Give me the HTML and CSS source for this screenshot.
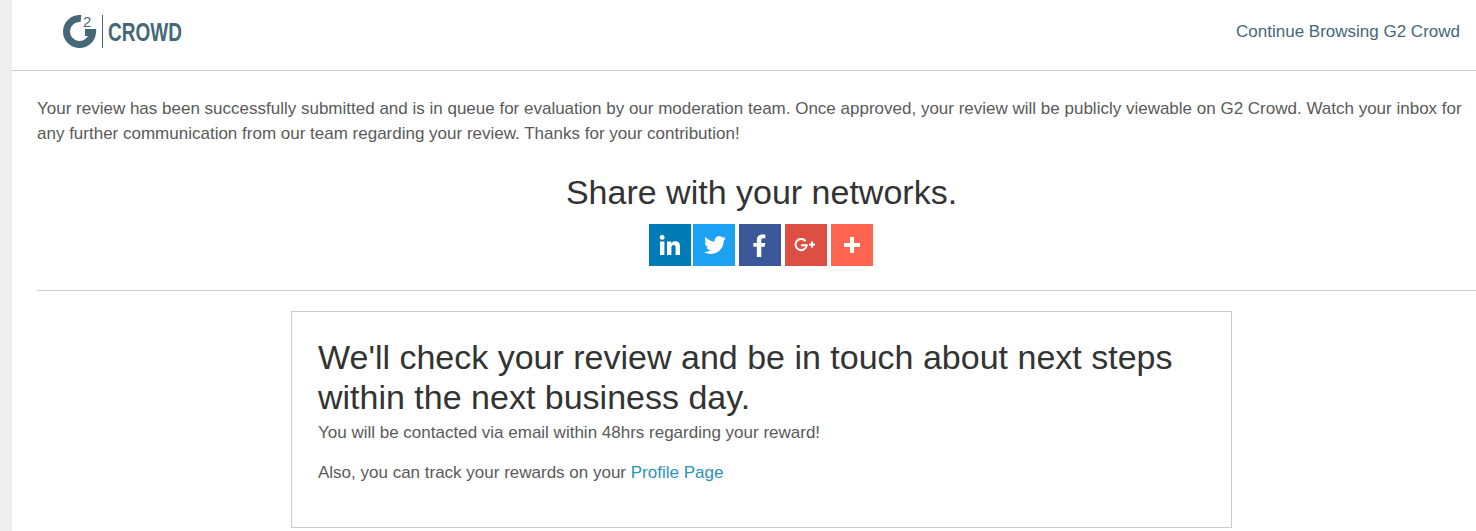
FILE: index.html
```html
<!DOCTYPE html>
<html lang="en">
<head>
    <meta charset="UTF-8">
    <meta name="viewport" content="width=device-width, initial-scale=1.0">
    <title>Review Submitted | G2 Crowd</title>
    <link rel="stylesheet" href="styles.css">
</head>
<body>
    <div class="page">
        <header class="site-header">
            <a class="logo" href="#home">
                <span class="logo-mark">
                    <svg width="34" height="34" viewBox="0 0 34 34" aria-hidden="true">
                        <path d="M18 3.600A13 13 0 1 0 29.500 17.500H22" fill="none" stroke="#456878" stroke-width="7"/>
                    </svg>
                    <span class="logo-two">2</span>
                </span>
                <span class="logo-word">CROWD</span>
            </a>
            <a class="continue-link" href="#browse">Continue Browsing G2 Crowd</a>
        </header>

        <main class="content">
            <p class="notice">Your review has been successfully submitted and is in queue for evaluation by our moderation team. Once approved, your review will be publicly viewable on G2 Crowd. Watch your inbox for any further communication from our team regarding your review. Thanks for your contribution!</p>

            <section class="share">
                <h2>Share with your networks.</h2>
                <div class="share-buttons">
                    <a class="share-btn linkedin" href="#linkedin" aria-label="LinkedIn">
                        <svg width="22" height="22" viewBox="0 0 22 22"><rect x="1" y="7.5" width="4.4" height="13.5" fill="#fff"/><circle cx="3.2" cy="3.4" r="2.4" fill="#fff"/><path d="M8 7.5h4.200v1.900c.8-1.300 2.300-2.200 4.200-2.200 3.400 0 4.600 2.200 4.600 5.600V21h-4.400v-7.300c0-1.600-.5-2.700-1.900-2.700-1.600 0-2.300 1.200-2.300 2.800V21H8z" fill="#fff"/></svg>
                    </a>
                    <a class="share-btn twitter" href="#twitter" aria-label="Twitter">
                        <svg width="22" height="22" viewBox="0 0 24 24"><path d="M23.953 4.57a10 10 0 01-2.825.775 4.958 4.958 0 002.163-2.723c-.951.555-2.005.959-3.127 1.184a4.92 4.92 0 00-8.384 4.482C7.69 8.095 4.067 6.13 1.64 3.162a4.822 4.822 0 00-.666 2.475c0 1.71.87 3.213 2.188 4.096a4.904 4.904 0 01-2.228-.616v.06a4.923 4.923 0 003.946 4.827 4.996 4.996 0 01-2.212.085 4.936 4.936 0 004.604 3.417 9.867 9.867 0 01-6.102 2.105c-.39 0-.779-.023-1.17-.067a13.995 13.995 0 007.557 2.209c9.053 0 13.998-7.496 13.998-13.985 0-.21 0-.42-.015-.63A9.935 9.935 0 0024 4.59z" fill="#fff"/></svg>
                    </a>
                    <a class="share-btn facebook" href="#facebook" aria-label="Facebook">
                        <svg width="13" height="23" viewBox="0 0 14 26"><path d="M4 26V14.500H0v-4.400h4V7c0-4.200 2.500-6.500 6.300-6.500 1.600 0 2.900.1 3.300.2v4.200h-2.300c-1.900 0-2.300.9-2.300 2.300v2.900h4.500l-.6 4.400H9V26z" fill="#fff"/></svg>
                    </a>
                    <a class="share-btn google" href="#google" aria-label="Google Plus">
                        <svg width="23" height="14" viewBox="0 0 23 14"><path d="M11.600 3.100A5.600 5.600 0 1 0 12.700 7.300H7" fill="none" stroke="#fff" stroke-width="2"/><path d="M18 3.600v6M15 6.600h6" fill="none" stroke="#fff" stroke-width="2"/></svg>
                    </a>
                    <a class="share-btn more" href="#more" aria-label="More">
                        <svg width="16" height="16" viewBox="0 0 16 16"><path d="M8 0v16M0 8h16" fill="none" stroke="#fff" stroke-width="4"/></svg>
                    </a>
                </div>
            </section>

            <hr class="divider">

            <section class="next-steps">
                <h2>We'll check your review and be in touch about next steps within the next business day.</h2>
                <p>You will be contacted via email within 48hrs regarding your reward!</p>
                <p>Also, you can track your rewards on your <a href="#profile">Profile Page</a></p>
            </section>
        </main>
    </div>
</body>
</html>
```

FILE: styles.css
```css
html, body {
    overflow-x: hidden;
}
body {
    margin: 0;
    background-color: #eee;
    font-family: "Liberation Sans", Arial, sans-serif;
    font-size: 17px;
    color: #5a5a5a;
}
a {
    text-decoration: none;
}
h2 {
    margin: 0;
    font-weight: normal;
    color: #333;
}
.page {
    margin-left: 12px;
    background-color: #fff;
    min-height: 531px;
}
.site-header {
    display: flex;
    align-items: center;
    justify-content: space-between;
    height: 64px;
    padding: 0 16px 6px 51px;
    border-bottom: 1px solid #ccc;
}
.logo {
    display: flex;
    align-items: center;
    margin-top: -1px;
    color: #456878;
}
.logo-mark {
    position: relative;
    width: 39px;
    height: 33px;
    border-right: 1px solid #456878;
    margin-right: 5px;
}
.logo-mark svg {
    display: block;
}
.logo-two {
    position: absolute;
    top: -1px;
    left: 20px;
    font-size: 15px;
    line-height: 16px;
}
.logo-word {
    display: inline-block;
    width: 75px;
    font-size: 25px;
    font-weight: bold;
    line-height: 30px;
    transform: scaleX(0.76);
    transform-origin: left center;
}
.continue-link {
    color: #456878;
}
.content {
    margin-right: -10px;
    padding: 25px 0 3px 25px;
}
.notice {
    margin: 0;
    line-height: 25px;
}
.share {
    text-align: center;
}
.share h2 {
    margin-top: 26px;
    font-size: 34px;
    line-height: 40px;
}
.share-buttons {
    display: flex;
    justify-content: center;
    gap: 4px;
    margin-top: 12px;
    padding-right: 2px;
}
.share-btn {
    display: flex;
    align-items: center;
    justify-content: center;
    width: 42px;
    height: 42px;
}
.linkedin {
    background-color: #007bb5;
    margin-right: -2px;
}
.twitter {
    background-color: #1da1f2;
}
.twitter svg {
    margin-left: 2px;
}
.facebook {
    background-color: #3b5998;
}
.google {
    background-color: #dd4f43;
}
.more {
    background-color: #ff6550;
}
.divider {
    margin: 24px 0 20px;
    border: 0;
    border-top: 1px solid #ccc;
}
.next-steps {
    box-sizing: border-box;
    width: 941px;
    height: 217px;
    margin: 0 auto;
    padding: 25px 26px 0;
    border: 1px solid #ccc;
}
.next-steps h2 {
    margin-bottom: 6px;
    font-size: 34px;
    line-height: 40px;
}
.next-steps p {
    margin: 0 0 20px;
    line-height: 20px;
}
.next-steps a {
    color: #2a93b8;
}
```
